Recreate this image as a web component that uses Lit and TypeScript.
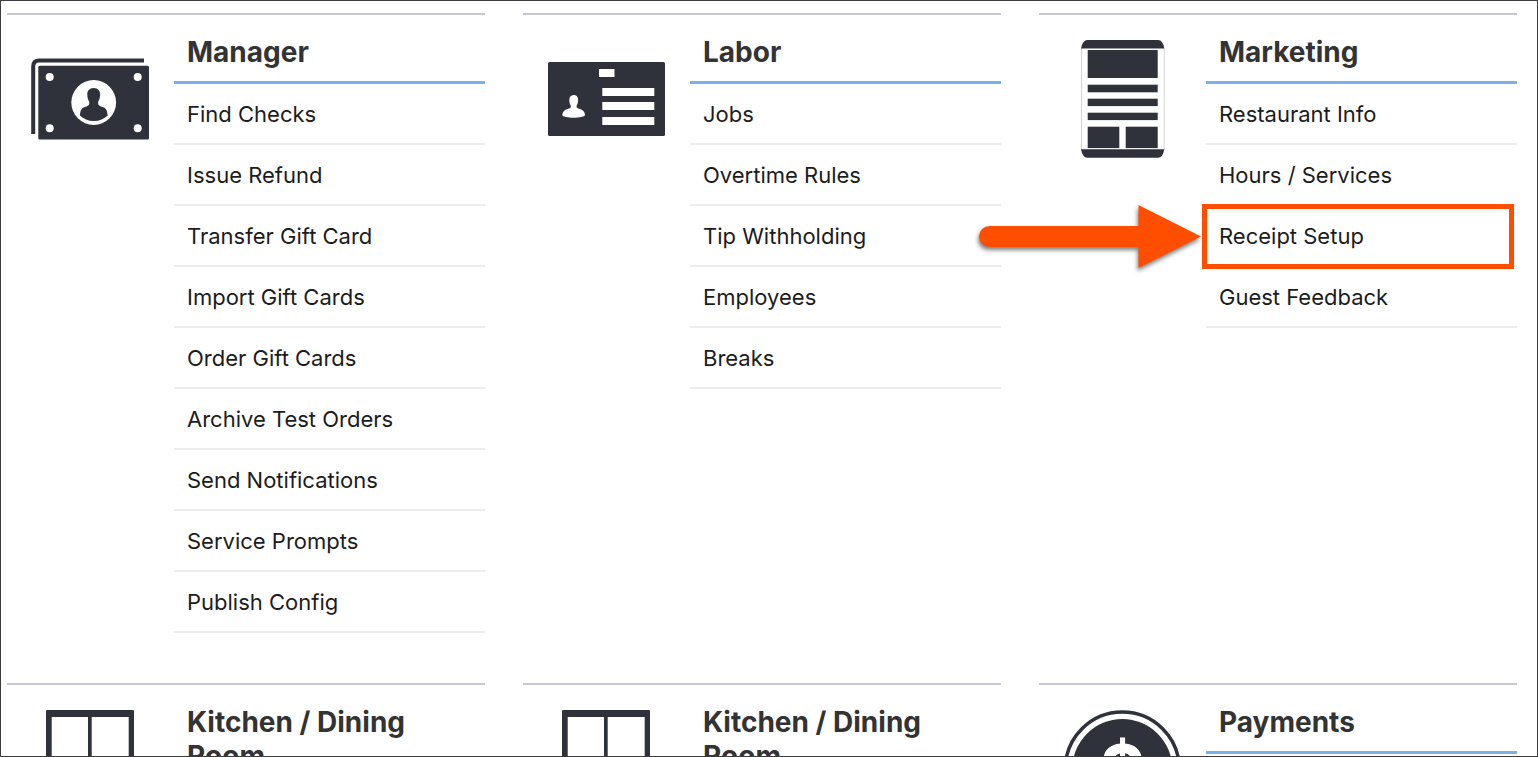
import { LitElement, html, svg, css, nothing } from "lit";
import { customElement, property } from "lit/decorators.js";

type IconName = "cash" | "badge" | "site" | "window" | "coin";

interface Section {
  title: string;
  icon: IconName;
  links: string[];
  highlighted?: string;
}

const SECTIONS: Section[] = [
  {
    title: "Manager",
    icon: "cash",
    links: [
      "Find Checks",
      "Issue Refund",
      "Transfer Gift Card",
      "Import Gift Cards",
      "Order Gift Cards",
      "Archive Test Orders",
      "Send Notifications",
      "Service Prompts",
      "Publish Config",
    ],
  },
  {
    title: "Labor",
    icon: "badge",
    links: ["Jobs", "Overtime Rules", "Tip Withholding", "Employees", "Breaks"],
  },
  {
    title: "Marketing",
    icon: "site",
    links: ["Restaurant Info", "Hours / Services", "Receipt Setup", "Guest Feedback"],
    highlighted: "Receipt Setup",
  },
  { title: "Kitchen / Dining Room", icon: "window", links: [] },
  { title: "Kitchen / Dining Room", icon: "window", links: [] },
  { title: "Payments", icon: "coin", links: [] },
];

const ICONS = {
  cash: svg`
    <path class="line" stroke-width="4" d="M2.2 94V26.5q0-6 6-6H113" />
    <rect x="7.3" y="25.7" width="110.7" height="73.8" rx="1.5" />
    <g class="light">
      <circle cx="18.7" cy="37" r="4" />
      <circle cx="106.7" cy="37" r="4" />
      <circle cx="18.7" cy="88.3" r="4" />
      <circle cx="106.7" cy="88.3" r="4" />
      <circle cx="62.7" cy="62.5" r="22.4" />
    </g>
    <path d="M62.7 48c-4.4 0-6.7 3-6.4 7 .2 3 .6 4.500 1.800 6.500.8 3.500-.6 4.300-3.600 5.300-4 1.300-5 3-5.600 8.700C52.5 79 57 81 62.8 81s10.5-2 13.900-5.500c-.6-5.700-1.800-7.400-5.800-8.700-3-1-4.400-1.800-3.600-5.300 1.200-2 1.600-3.500 1.800-6.500.3-4-2-7-6.400-7z" />
  `,
  badge: svg`
    <rect x="1" y="22" width="117" height="74" rx="1.5" />
    <g class="light">
      <rect x="52" y="29" width="15.5" height="8" />
      <rect x="55.3" y="48" width="52" height="8" />
      <rect x="55.3" y="62" width="52" height="8" />
      <rect x="55.3" y="77" width="52" height="8" />
      <path d="M26.7 55c-3 0-4.5 2.200-4.400 5 .1 2.500.5 4 1.400 5.500.5 1.800 0 2.500-2.500 3.300-4 1.300-5.900 3.200-5.900 6.200 0 1.700 6 2.700 11.400 2.700S38 76.700 38 75c0-3-1.800-4.900-5.800-6.200-2.500-.8-3-1.500-2.500-3.300.9-1.500 1.300-3 1.400-5.500.1-2.800-1.400-5-4.400-5z" />
    </g>
  `,
  site: svg`
    <path class="hair" d="M18.5 8V110M101.2 8V110" />
    <path d="M18 8.500Q19.5 0 24.5 0H95Q100 0 101.3 8.500z" />
    <path d="M18 109.3Q19.5 117.7 24.5 117.7H95Q100 117.7 101.3 109.3z" />
    <rect x="24.7" y="10" width="70" height="28" />
    <rect x="24.7" y="44.7" width="70" height="7.6" />
    <rect x="24.7" y="58.7" width="70" height="7.4" />
    <rect x="24.7" y="72.7" width="70" height="7.4" />
    <rect x="24.7" y="86.7" width="31.6" height="21.4" />
    <rect x="62.7" y="86.7" width="32" height="21.4" />
  `,
  window: svg`
    <path fill-rule="evenodd" d="M16 0H102q1 0 1 1V117H15V1q0-1 1-1zM20.7 7V111H57V7zM60.7 7V111H97.7V7z" />
  `,
  coin: svg`
    <circle class="line" cx="59.3" cy="59" r="57" stroke-width="3.5" />
    <circle cx="59.3" cy="59" r="50" />
    <text class="dollar" x="59.3" y="84" text-anchor="middle">$</text>
  `,
};

@customElement("section-icon")
class SectionIcon extends LitElement {
  @property() name: IconName = "cash";

  static styles = css`
    :host {
      display: block;
    }
    .icon {
      display: block;
      width: 118px;
      height: 118px;
      fill: #2f323a;
    }
    .line {
      fill: none;
      stroke: #2f323a;
    }
    .hair {
      fill: none;
      stroke: #d4d4d6;
    }
    .light,
    .dollar {
      fill: #fff;
    }
    .dollar {
      font: 700 68px Inter, sans-serif;
      stroke: #fff;
      stroke-width: 1px;
    }
  `;

  render() {
    return html`<svg class="icon" viewBox="0 0 118 118" aria-hidden="true">${ICONS[this.name]}</svg>`;
  }
}

@customElement("callout-arrow")
class CalloutArrow extends LitElement {
  static styles = css`
    :host {
      display: block;
    }
    .arrow {
      display: block;
      overflow: visible;
      fill: #ff4e00;
      filter: drop-shadow(-1px 3px 2px rgba(0, 0, 0, 0.5));
    }
  `;

  render() {
    return html`<svg class="arrow" width="222" height="64" viewBox="0 0 222 64" aria-hidden="true">
      <path d="M10.500 21H159.500V0L222 31.500 159.500 63V42H10.500a10.500 10.500 0 0 1 0-21z" />
    </svg>`;
  }
}

@customElement("app-root")
class AppRoot extends LitElement {
  static styles = css`
    :host {
      display: block;
      box-sizing: border-box;
      height: 100vh;
      overflow: hidden;
      padding: 12px 20px 0 6px;
      border: 1px solid #3c3c3c;
      background: #fff;
      color: #1c1c1c;
      font-family: Inter, sans-serif;
    }
    .sections {
      display: grid;
      grid-template-columns: repeat(3, minmax(0, 1fr));
      gap: 50px 38px;
    }
    .section {
      display: flex;
      border-top: 2px solid #c8c6d4;
    }
    .picture {
      flex: none;
      width: 143px;
      padding: 25px 0 0 24px;
    }
    .content {
      flex: 1;
      min-width: 0;
    }
    .title {
      margin: 0;
      padding: 20px 13px 12px;
      border-bottom: 3px solid #7ab1ea;
      color: #333;
      font-size: 28px;
      line-height: 34px;
      font-weight: 700;
    }
    .links {
      margin: 0;
      padding: 0;
      list-style: none;
    }
    .item {
      position: relative;
      border-bottom: 2px solid #ededed;
    }
    .link {
      display: block;
      padding: 15px 13px 14px;
      color: inherit;
      font-size: 22px;
      line-height: 30px;
      text-decoration: none;
    }
    .frame {
      position: absolute;
      inset: -2px 3px -4px -4px;
      border: 5px solid #ff4e00;
      pointer-events: none;
    }
    .pointer {
      position: absolute;
      top: -1px;
      right: calc(100% + 5px);
      pointer-events: none;
    }
  `;

  renderSection(section: Section) {
    return html`<section class="section">
      <div class="picture"><section-icon name=${section.icon}></section-icon></div>
      <div class="content">
        <h2 class="title">${section.title}</h2>
        <ul class="links">
          ${section.links.map(
            (label) => html`<li class="item">
              <a class="link" href="#">${label}</a>
              ${label === section.highlighted
                ? html`<div class="frame"></div>
                    <callout-arrow class="pointer"></callout-arrow>`
                : nothing}
            </li>`
          )}
        </ul>
      </div>
    </section>`;
  }

  render() {
    return html`<main class="sections">${SECTIONS.map((s) => this.renderSection(s))}</main>`;
  }
}
